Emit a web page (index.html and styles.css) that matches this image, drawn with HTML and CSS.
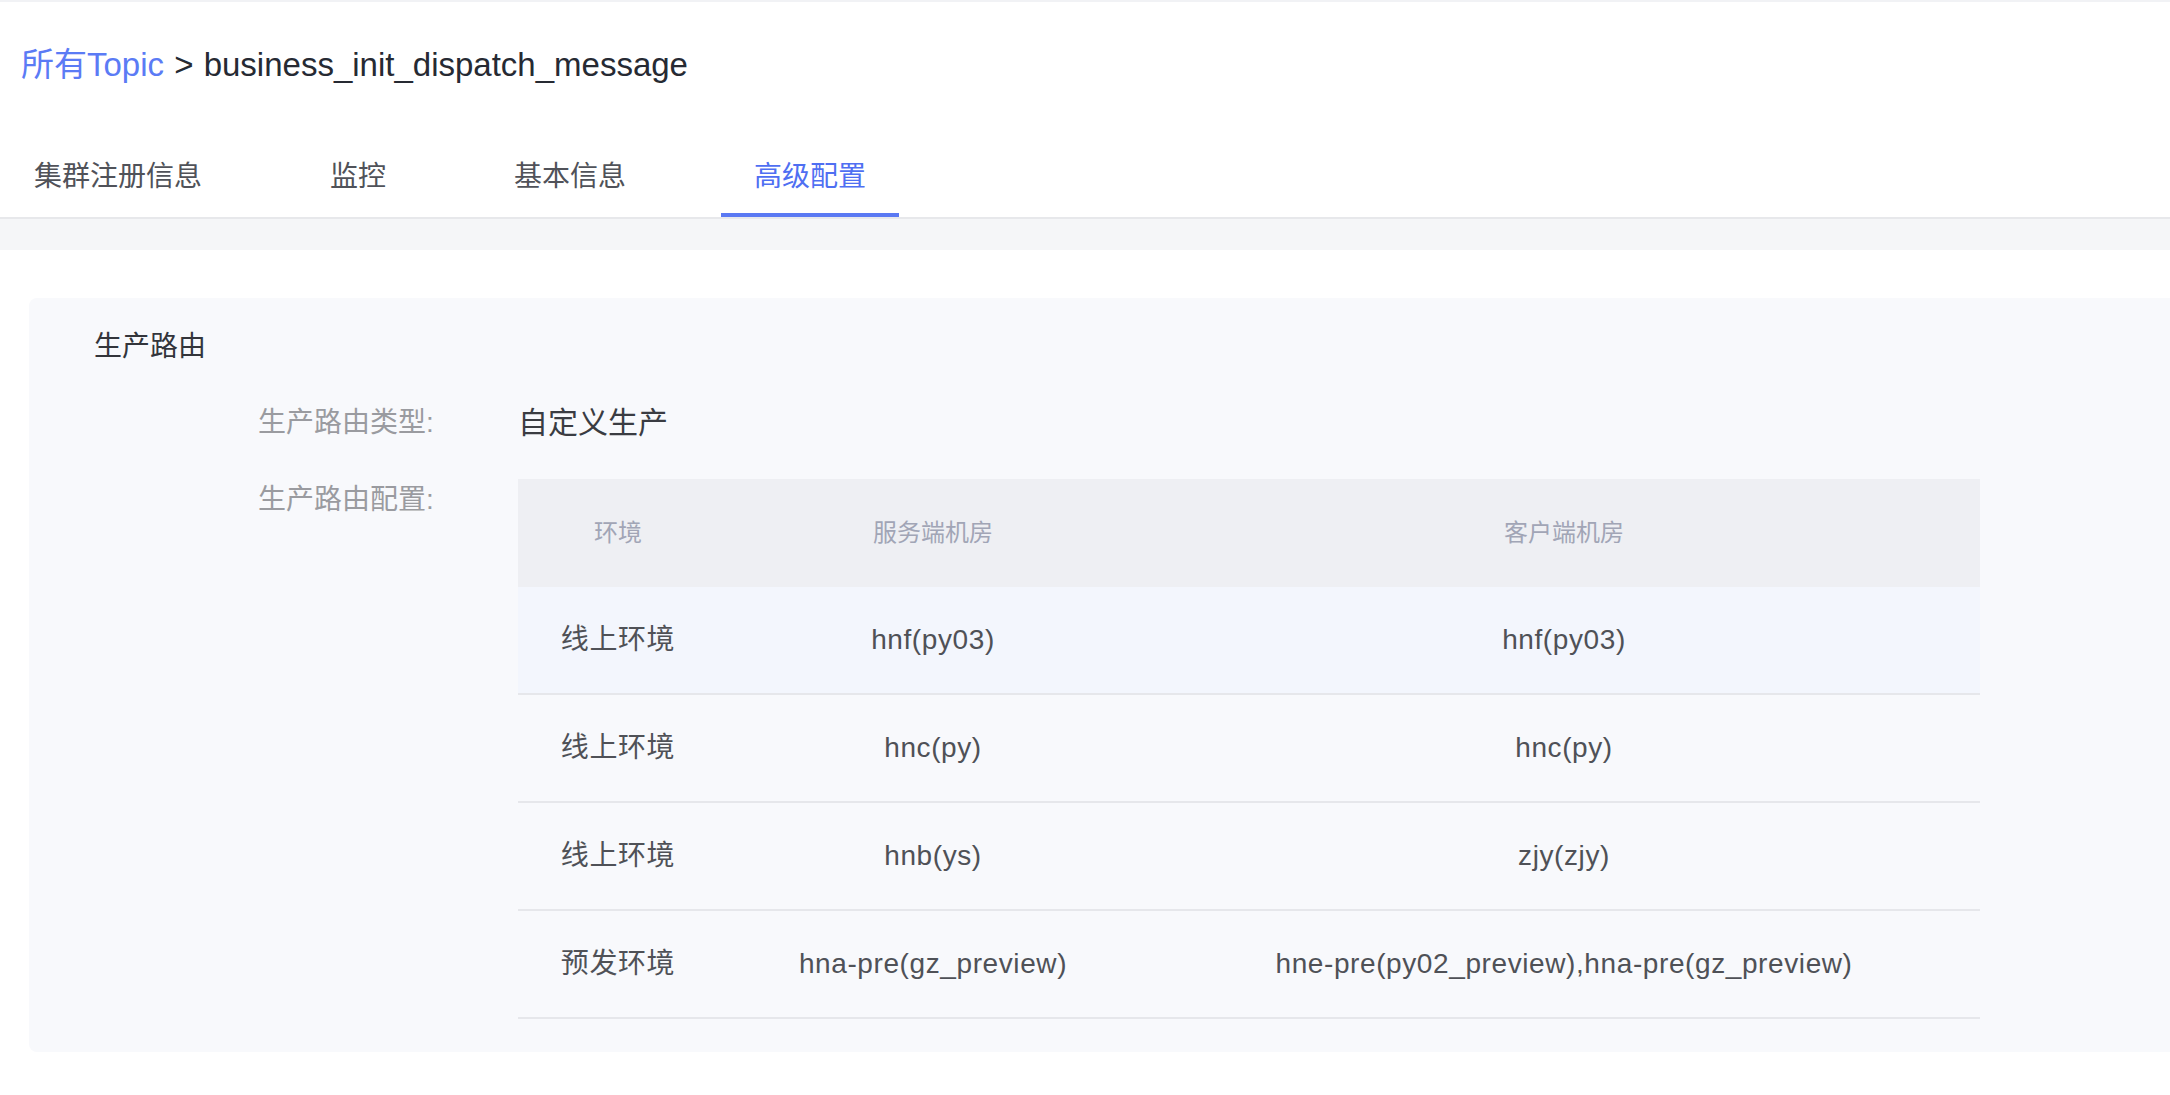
FILE: index.html
```html
<!DOCTYPE html>
<html lang="zh-CN">
<head>
<meta charset="utf-8">
<title>business_init_dispatch_message</title>
<link rel="stylesheet" href="styles.css">
</head>
<body>
<div class="page">
  <div class="breadcrumb">
    <a class="crumb-link">所有Topic</a><span class="crumb-sep"> &gt; </span><span class="crumb-cur">business_init_dispatch_message</span>
  </div>
  <div class="tabs">
    <div class="tab">集群注册信息</div>
    <div class="tab">监控</div>
    <div class="tab">基本信息</div>
    <div class="tab tab-active">高级配置</div>
  </div>
  <div class="band"></div>
  <div class="card">
    <div class="card-title">生产路由</div>
    <div class="form-row">
      <div class="label">生产路由类型:</div>
      <div class="value value-text">自定义生产</div>
    </div>
    <div class="form-row">
      <div class="label">生产路由配置:</div>
      <div class="value">
        <div class="rt">
          <div class="rt-row rt-head">
            <div>环境</div><div>服务端机房</div><div>客户端机房</div>
          </div>
          <div class="rt-row rt-hover">
            <div>线上环境</div><div>hnf(py03)</div><div>hnf(py03)</div>
          </div>
          <div class="rt-row">
            <div>线上环境</div><div>hnc(py)</div><div>hnc(py)</div>
          </div>
          <div class="rt-row">
            <div>线上环境</div><div>hnb(ys)</div><div>zjy(zjy)</div>
          </div>
          <div class="rt-row">
            <div>预发环境</div><div>hna-pre(gz_preview)</div><div>hne-pre(py02_preview),hna-pre(gz_preview)</div>
          </div>
        </div>
      </div>
    </div>
  </div>
</div>
</body>
</html>
```

FILE: styles.css
```css
html, body {
  margin: 0;
  padding: 0;
  background: #ffffff;
}

body {
  font-family: "Liberation Sans", "Noto Sans CJK SC", sans-serif;
  color: #2a2d35;
  border-top: 2px solid #f1f2f5;
  overflow: hidden;
}

.page {
  display: flex;
  flex-direction: column;
}

.breadcrumb {
  padding: 40px 0 0 21px;
  height: 46px;
  line-height: 46px;
  font-size: 33px;
  white-space: nowrap;
}

.crumb-link {
  color: #5b7bf5;
}

.crumb-sep,
.crumb-cur {
  color: #262a33;
}

.crumb-sep {
  padding: 0 1px;
}

.tabs {
  display: flex;
  gap: 62px;
  padding-left: 1px;
  border-bottom: 2px solid #e7e8eb;
}

.tab {
  padding: 69px 33px 16px;
  line-height: 40px;
  font-size: 28px;
  color: #505259;
  border-bottom: 4px solid transparent;
  white-space: nowrap;
}

.tab-active {
  color: #4f6ff2;
  border-bottom-color: #5a79f3;
}

.band {
  height: 31px;
  background: #f5f6f8;
}

.card {
  margin: 48px 0 0 29px;
  padding: 29px 0 33px 65px;
  background: #f8f9fc;
  border-radius: 8px 0 0 8px;
}

.card-title {
  font-size: 28px;
  line-height: 40px;
  color: #33353b;
}

.form-row {
  display: flex;
  margin-top: 36px;
}

.label {
  width: 260px;
  margin-left: 164px;
  flex-shrink: 0;
  font-size: 28px;
  line-height: 40px;
  color: #9a9ba0;
}

.value {
  font-size: 28px;
  line-height: 40px;
  color: #3a3c42;
}

.value-text {
  font-size: 30px;
}

.form-row + .form-row .label {
  margin-top: 1px;
}

.rt {
  width: 1462px;
  display: flex;
  flex-direction: column;
}

.rt-row {
  display: grid;
  grid-template-columns: 200px 430px 1fr;
  align-items: center;
  text-align: center;
  height: 108px;
  box-sizing: border-box;
  border-bottom: 2px solid #e6e7eb;
  font-size: 28px;
  letter-spacing: 0.6px;
  color: #4f5157;
  white-space: nowrap;
}

.rt-head {
  background: #eeeff3;
  border-bottom: none;
  font-size: 24px;
  letter-spacing: 0;
  color: #a1a5b6;
}

.rt-hover {
  background: #f3f6fd;
}
```
